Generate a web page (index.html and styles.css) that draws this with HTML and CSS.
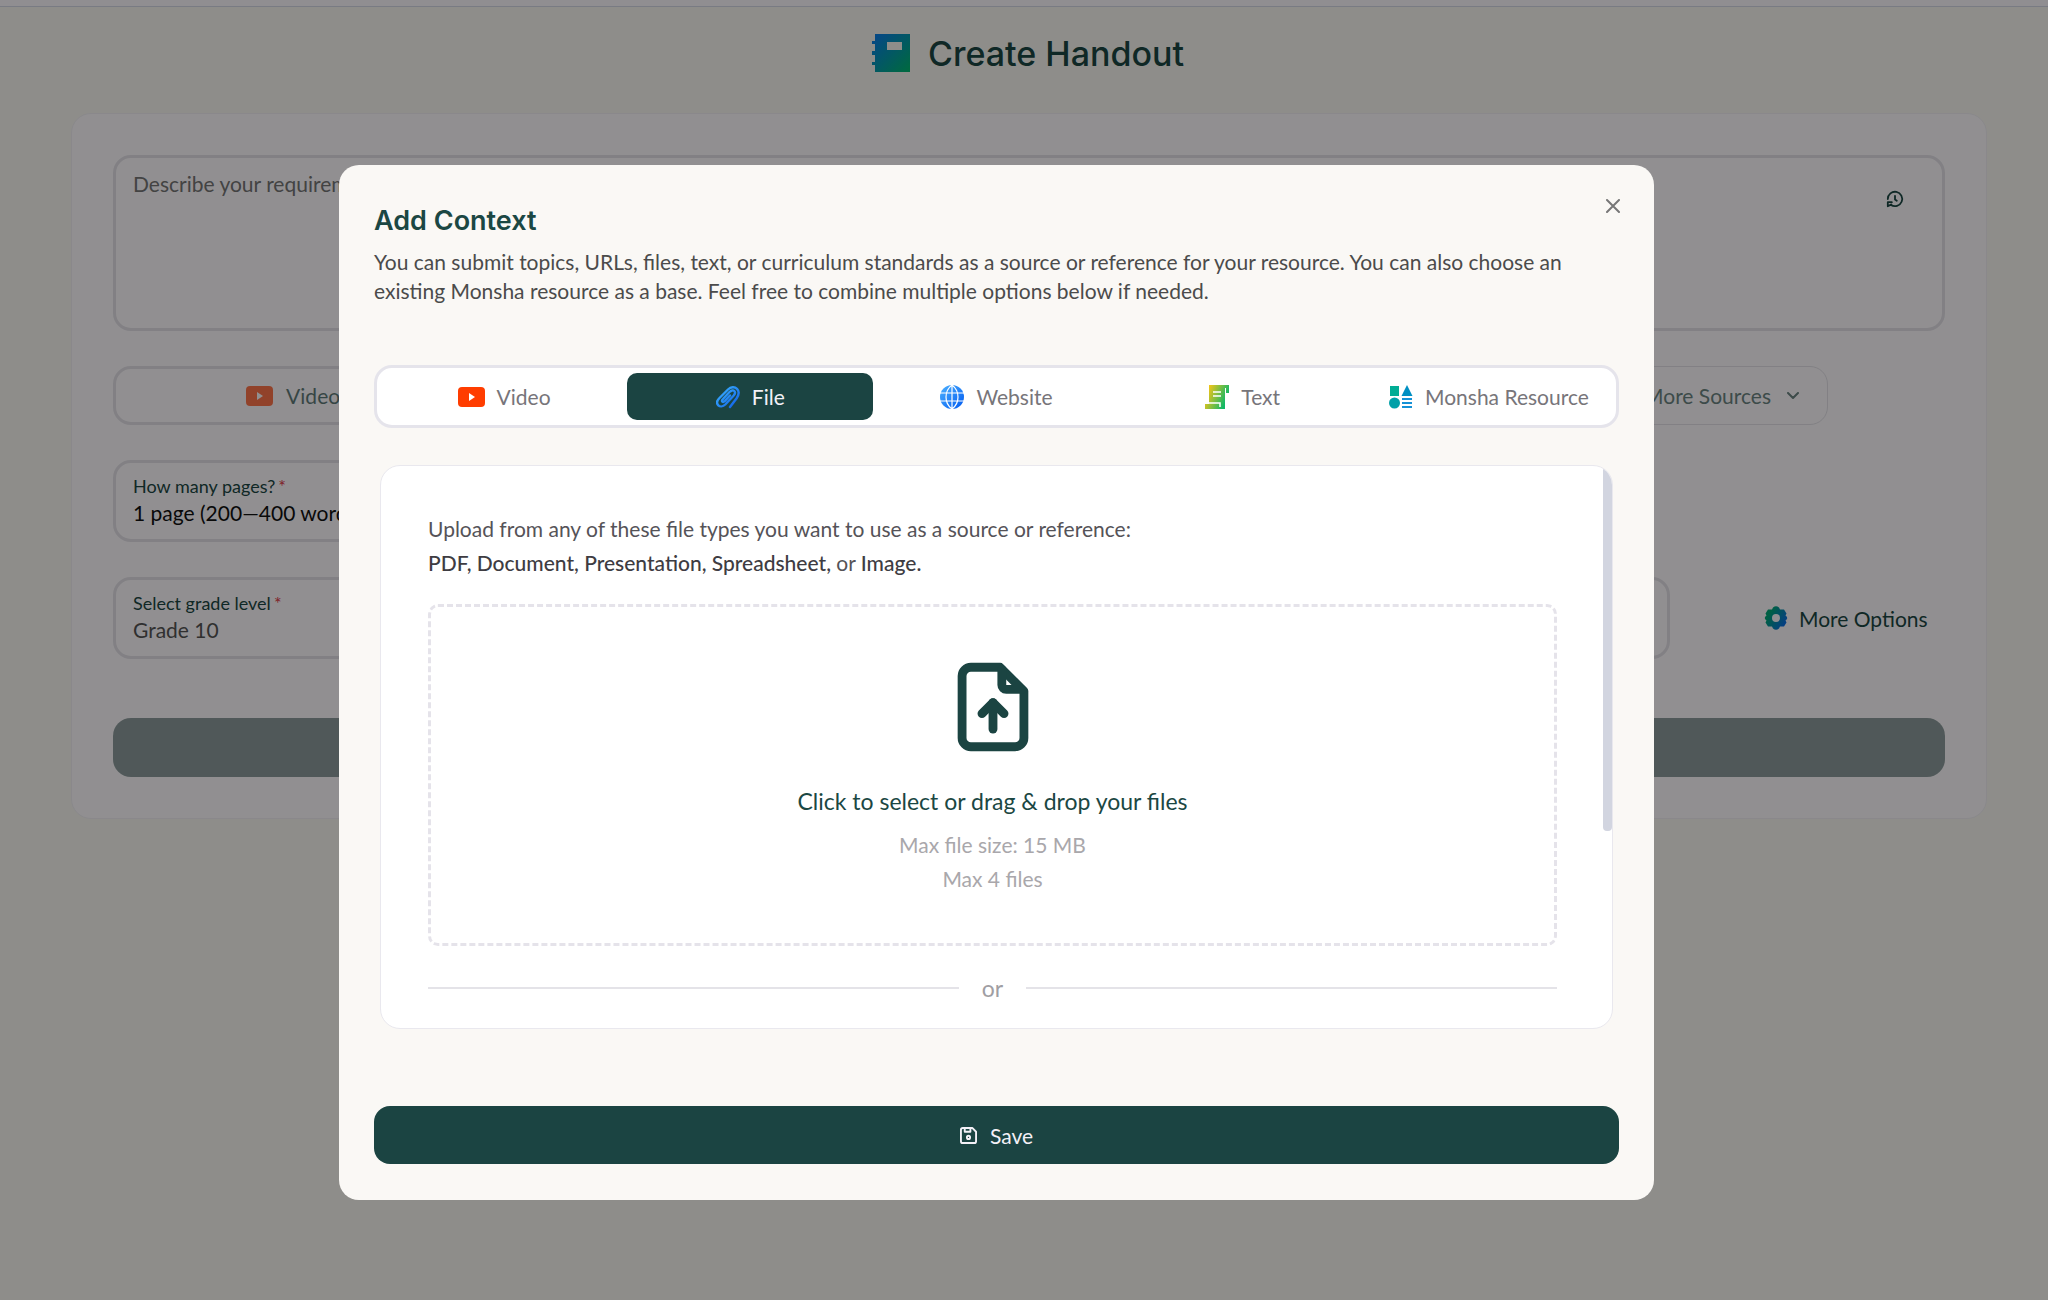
FILE: index.html
```
<!DOCTYPE html>
<html lang="en">
<head>
    <meta charset="UTF-8">
    <meta name="viewport" content="width=device-width, initial-scale=1.0">
    <title>Create Handout</title>
    <link rel="stylesheet" href="styles.css">
</head>
<body>

    <header class="page-header">
        <svg class="title-icon" viewBox="0 0 38 38" aria-hidden="true">
            <defs>
                <linearGradient id="bookFill" x1="0" y1="0" x2="1" y2="1">
                    <stop offset="0.1" stop-color="#0a80e6"/>
                    <stop offset="0.95" stop-color="#00b873"/>
                </linearGradient>
            </defs>
            <path fill="url(#bookFill)" fill-rule="evenodd" d="M3 0H38V38H3V31H0V28H3V21H0V17H3V10H0V7H3ZM15 8V16H30V8Z"/>
        </svg>
        <h1>Create Handout</h1>
    </header>

    <main class="card">
        <div class="prompt">
            <textarea aria-label="Requirements" placeholder="Describe your requirements"></textarea>
            <button class="history" aria-label="History">
                <svg viewBox="0 0 20 20" fill="none" stroke="currentColor" stroke-width="2" stroke-linecap="round" stroke-linejoin="round">
                    <path d="M2 10a8 8 0 1 1 3.5 6.6M2 18v-4.5h4.5M2 18l4-2"/>
                    <path d="M10 6.500v4l2 1.500"/>
                </svg>
            </button>
        </div>

        <div class="sources">
            <div class="source-tabs">
                <button class="source">
                    <svg class="icon-video" viewBox="0 0 27 20" aria-hidden="true"><rect width="27" height="20" rx="4" fill="#ff3d00"/><path d="M11 6v8l6-4z" fill="#fff"/></svg>
                    Video
                </button>
            </div>
            <button class="more-sources">
                More Sources
                <svg viewBox="0 0 12 8" fill="none" stroke="currentColor" stroke-width="2" stroke-linecap="round" stroke-linejoin="round"><path d="M1 1l5 5 5-5"/></svg>
            </button>
        </div>

        <div class="fields">
            <div class="field">
                <label for="pages">How many pages?<span class="required">*</span></label>
                <select id="pages" class="picked"><option>1 page (200—400 words)</option></select>
            </div>
        </div>

        <div class="fields">
            <div class="field wide">
                <label for="grade">Select grade level<span class="required">*</span></label>
                <select id="grade"><option>Grade 10</option></select>
            </div>
            <button class="more-options">
                <svg viewBox="0 0 24 24" aria-hidden="true">
                    <defs>
                        <linearGradient id="gearFill" x1="0" y1="0.2" x2="1" y2="0.8">
                            <stop offset="0.2" stop-color="#00a878"/>
                            <stop offset="0.9" stop-color="#0a6fe6"/>
                        </linearGradient>
                    </defs>
                    <path fill="url(#gearFill)" fill-rule="evenodd" d="M9 1.500Q12-1 15 1.500L16 3.500L20 3.500L22.500 7.500L21.500 9.500Q25 12 21.500 14.500L22.500 16.500L20 20.500L16 20.500L15 22.500Q12 25 9 22.500L8 20.500L4 20.500L1.500 16.500L2.500 14.500Q-1 12 2.500 9.500L1.500 7.500L4 3.500L8 3.500ZM12 8a4 4 0 1 0 0 8a4 4 0 1 0 0-8Z"/>
                </svg>
                More Options
            </button>
        </div>

        <button class="create" aria-label="Create" disabled></button>
    </main>

    <div class="overlay">
        <div class="modal" role="dialog" aria-labelledby="modalTitle">
            <button class="close" aria-label="Close">
                <svg viewBox="0 0 14 14" fill="none" stroke="currentColor" stroke-width="2" stroke-linecap="round"><path d="M1 1l12 12M13 1L1 13"/></svg>
            </button>
            <h2 id="modalTitle">Add Context</h2>
            <p class="intro">You can submit topics, URLs, files, text, or curriculum standards as a source or reference for your resource. You can also choose an existing Monsha resource as a base. Feel free to combine multiple options below if needed.</p>

            <div class="tabs" role="tablist">
                <button role="tab" class="tab">
                    <svg class="icon-video" viewBox="0 0 27 20" aria-hidden="true"><rect width="27" height="20" rx="4" fill="#ff3d00"/><path d="M11 6v8l6-4z" fill="#fff"/></svg>
                    Video
                </button>
                <button role="tab" class="tab active" aria-selected="true">
                    <svg class="icon" viewBox="0 0 24 24" fill="none" stroke="url(#clipFill)" stroke-width="2.400" stroke-linecap="round" aria-hidden="true">
                        <defs>
                            <linearGradient id="clipFill" x1="0" y1="0" x2="1" y2="1">
                                <stop offset="0.1" stop-color="#3bb0ff"/>
                                <stop offset="0.9" stop-color="#1264e8"/>
                            </linearGradient>
                        </defs>
                        <path d="M14 22l6.500-8.500c2.700-4 2.700-7.500.5-9.700s-6-2.300-9 .7l-8.500 8.500c-3 3-2.700 5.800-1.200 7.300s4.500 1.700 7-.8l8-8.500c2-2.200 2-4 1-5s-3-.8-4.800 1l-6.500 7c-1 1-1.200 2-.6 2.600s1.500.4 2.600-.7l5-5.400"/>
                    </svg>
                    File
                </button>
                <button role="tab" class="tab">
                    <svg class="icon" viewBox="0 0 24 24" aria-hidden="true">
                        <defs>
                            <linearGradient id="globeFill" x1="0" y1="0" x2="1" y2="1">
                                <stop offset="0" stop-color="#4db2ff"/>
                                <stop offset="1" stop-color="#0059f0"/>
                            </linearGradient>
                        </defs>
                        <circle cx="12" cy="12" r="12" fill="url(#globeFill)"/>
                        <path d="M12 0v24M0 8h24M0 16h24M12 0C4 6 4 18 12 24M12 0c8 6 8 18 0 24" fill="none" stroke="#fff" stroke-width="1.200"/>
                    </svg>
                    Website
                </button>
                <button role="tab" class="tab">
                    <svg class="icon" viewBox="0 0 24 24" aria-hidden="true">
                        <defs>
                            <linearGradient id="textFill" x1="0" y1="0.2" x2="1" y2="0.6">
                                <stop offset="0.1" stop-color="#f0c419"/>
                                <stop offset="0.9" stop-color="#12b866"/>
                            </linearGradient>
                        </defs>
                        <path fill="url(#textFill)" d="M4 0H24V8H21V3H20V24H0V19H4Z"/>
                        <path d="M8 7h8M8 11h8M1 18h14v4" fill="none" stroke="#fff" stroke-width="1.500"/>
                    </svg>
                    Text
                </button>
                <button role="tab" class="tab">
                    <svg class="icon" viewBox="0 0 24 24" aria-hidden="true">
                        <path fill="#00ad95" d="M1 1h9v10H1z"/>
                        <path fill="#008fc2" d="M18 0l5.500 11h-11z"/>
                        <circle cx="5.500" cy="18" r="5.500" fill="#00a0a8"/>
                        <path d="M13 14h10M13 18h10M13 22h10" stroke="#1591d6" stroke-width="2.200"/>
                    </svg>
                    Monsha Resource
                </button>
            </div>

            <section class="panel">
                <p class="upload-text">Upload from any of these file types you want to use as a source or reference:<br><strong>PDF, Document, Presentation, Spreadsheet,</strong> or <strong>Image.</strong></p>
                <button class="dropzone">
                    <svg class="upload-icon" viewBox="0 0 24 24" fill="none" stroke="currentColor" stroke-width="2" stroke-linecap="round" stroke-linejoin="round">
                        <path d="M13.600 3H7a2 2 0 0 0-2 2v14a2 2 0 0 0 2 2h10a2 2 0 0 0 2-2V8.400L13.600 3Z"/>
                        <path d="M14 3.500V7a1 1 0 0 0 1 1h3.500"/>
                        <path d="M12 17v-6"/>
                        <path d="M9.500 13.500L12 11l2.500 2.500"/>
                    </svg>
                    <span class="drop-title">Click to select or drag &amp; drop your files</span>
                    <span class="drop-hint">Max file size: 15 MB</span>
                    <span class="drop-hint">Max 4 files</span>
                </button>
                <div class="divider">or</div>
                <div class="scroll-thumb"></div>
            </section>

            <button class="save">
                <svg viewBox="0 0 18 18" fill="none" stroke="currentColor" stroke-width="2" stroke-linejoin="round" aria-hidden="true">
                    <path d="M3 1h10l4 4v10a2 2 0 0 1-2 2H3a2 2 0 0 1-2-2V3a2 2 0 0 1 2-2z"/>
                    <path d="M5 1v4h6V1"/>
                    <circle cx="9" cy="11" r="1.700"/>
                </svg>
                Save
            </button>
        </div>
    </div>

</body>
</html>
```
FILE: styles.css
```
* {
    box-sizing: border-box;
}
body {
    margin: 0;
    min-height: 100vh;
    background: #faf8f3;
    color: #464646;
    font-family: Lato, "Liberation Sans", sans-serif;
    font-size: 21px;
    border-top: 6px solid #fdf9ff;
}
button,
select,
textarea {
    font: inherit;
    color: inherit;
    background: none;
    border: none;
    margin: 0;
    padding: 0;
}
button {
    display: flex;
    align-items: center;
    justify-content: center;
    cursor: pointer;
}
svg {
    display: block;
    flex: none;
}
h1,
h2 {
    margin: 0;
    color: #1b4743;
    font-family: Inter, "Liberation Sans", sans-serif;
}

/* page */
.page-header {
    display: flex;
    align-items: center;
    justify-content: center;
    gap: 18px;
    height: 107px;
    padding: 0 62px 14px 70px;
    border-top: 1px solid #d5d8e6;
}
h1 {
    font-size: 34px;
    font-weight: 500;
}
.title-icon {
    width: 38px;
    height: 38px;
}
.card {
    display: flex;
    flex-direction: column;
    gap: 35px;
    margin: 0 61px 0 71px;
    padding: 41px;
    background: #fffcff;
    border: 1px solid #f2f0f5;
    border-radius: 20px;
}
.prompt {
    position: relative;
    height: 176px;
}
.prompt textarea {
    width: 100%;
    height: 100%;
    padding: 13px 17px;
    border: 3px solid #e4e2e8;
    border-radius: 18px;
    resize: none;
}
.prompt textarea::placeholder {
    color: #767676;
}
.history {
    position: absolute;
    top: 35px;
    right: 41px;
    color: #1b4743;
}
.history svg {
    width: 18px;
    height: 18px;
}
.sources {
    display: flex;
    gap: 28px;
    height: 59px;
}
.source-tabs {
    display: flex;
    flex: 1;
    border: 3px solid #e4e2e8;
    border-radius: 18px;
}
.source {
    width: 25%;
    gap: 13px;
    padding-right: 4px;
    color: #1b4743;
    opacity: 0.7;
}
.icon-video {
    width: 27px;
    height: 20px;
}
.more-sources {
    gap: 16px;
    width: 248px;
    margin-right: 117px;
    padding-right: 28px;
    justify-content: flex-end;
    border: 1px solid #e4e2e8;
    border-radius: 18px;
    color: #6c8582;
}
.more-sources svg {
    width: 12px;
    height: 8px;
}
.fields {
    display: flex;
}
.field {
    flex: 0 1 50%;
    height: 82px;
    padding: 11px 17px;
    border: 3px solid #e4e2e8;
    border-radius: 18px;
}
.field.wide {
    flex: 1;
}
.field label {
    display: block;
    font-size: 18px;
    line-height: 24px;
    color: #1b4743;
}
.required {
    color: #e0384a;
    padding-left: 3px;
}
.field select {
    display: block;
    width: 100%;
    height: 28px;
    appearance: none;
    color: #555;
}
.field .picked {
    color: #111;
}
.more-options {
    width: 275px;
    padding-left: 94px;
    justify-content: flex-start;
    gap: 11px;
    color: #1b4743;
    white-space: nowrap;
}
.more-options svg {
    width: 24px;
    height: 24px;
}
.create {
    height: 59px;
    margin-top: 24px;
    border-radius: 18px;
    background: #8d9c9d;
}

/* dialog */
.overlay {
    position: fixed;
    inset: 0;
    display: flex;
    align-items: flex-start;
    justify-content: center;
    padding: 165px 55px 0 0;
    background: rgba(0, 0, 0, 0.43);
    overflow: auto;
}
.modal {
    position: relative;
    width: 66%;
    max-width: 1315px;
    padding: 36px 35px;
    background: #faf8f5;
    border-radius: 20px;
}
.close {
    position: absolute;
    top: 34px;
    right: 34px;
    color: #777;
}
.close svg {
    width: 14px;
    height: 14px;
}
h2 {
    font-size: 27px;
    font-weight: 600;
    line-height: 40px;
}
.intro {
    margin: 6px 0 60px;
    line-height: 29px;
    color: #4b4b4b;
}
.tabs {
    display: flex;
    padding: 5px 4px;
    background: #fff;
    border: 3px solid #e5e4eb;
    border-radius: 18px;
}
.tab {
    flex: 1 1 0;
    height: 47px;
    gap: 12px;
    border-radius: 10px;
    color: #77757a;
    white-space: nowrap;
}
.tab.active {
    background: #1b4442;
    color: #f3f1f7;
}
.icon {
    width: 24px;
    height: 24px;
}
.panel {
    position: relative;
    height: 564px;
    margin: 37px 6px 77px;
    padding: 46px 55px 0 47px;
    background: #fff;
    border: 1px solid #e9e8ee;
    border-radius: 20px;
    overflow: hidden;
}
.upload-text {
    margin: 0 0 24px;
    line-height: 34px;
    color: #555358;
}
.upload-text strong {
    font-weight: 500;
    color: #3e3c42;
}
.dropzone {
    flex-direction: column;
    width: 100%;
    height: 342px;
    border: 3px dashed #e5e3ea;
    border-radius: 10px;
}
.upload-icon {
    width: 106px;
    height: 106px;
    margin-bottom: 24px;
    color: #1b4442;
}
.drop-title {
    margin-bottom: 10px;
    font-size: 23px;
    line-height: 34px;
    color: #1b4743;
}
.drop-hint {
    line-height: 34px;
    color: #a9a7ab;
}
.divider {
    display: flex;
    align-items: center;
    gap: 23px;
    margin-top: 25px;
    line-height: 34px;
    font-size: 23px;
    color: #a09ea3;
}
.divider::before,
.divider::after {
    content: "";
    flex: 1;
    height: 2px;
    background: #e4e3e8;
}
.scroll-thumb {
    position: absolute;
    top: 0;
    right: 0;
    width: 9px;
    height: 365px;
    border-radius: 4px;
    background: #d2d5e0;
}
.save {
    width: 100%;
    height: 58px;
    gap: 13px;
    border-radius: 16px;
    background: #1b4442;
    color: #f3f1f7;
}
.save svg {
    width: 17px;
    height: 17px;
}
```
